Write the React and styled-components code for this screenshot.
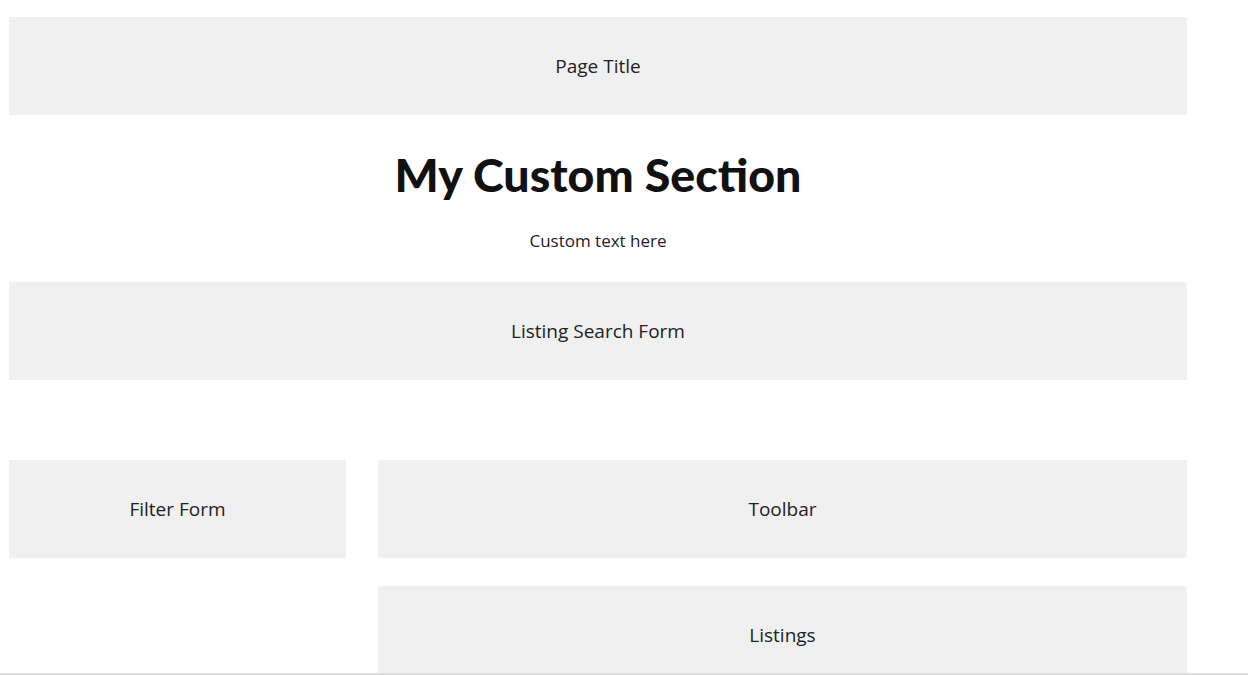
import React from "react";
import styled, { createGlobalStyle } from "styled-components";

const Global = createGlobalStyle`
  html, body { margin: 0; padding: 0; background: #fff; }
  body { font-family: "Open Sans", "Noto Sans", sans-serif; color: #222; overflow: hidden; }
`;

const Page = styled.div`
  width: 1178px;
  margin-left: 9px;
  padding-top: 17px;
`;

const Block = styled.div`
  background: #f0f0f0;
  height: ${(p) => p.$h || 98}px;
  display: flex;
  align-items: ${(p) => (p.$top ? "flex-start" : "center")};
  justify-content: center;
  padding-top: ${(p) => (p.$top ? "36px" : "0")};
  box-sizing: border-box;
  font-size: 19px;
  line-height: 26px;
  color: #222;
`;

const Section = styled.section`
  text-align: center;
  padding: 32px 0 29px;
`;

const Heading = styled.h2`
  margin: 0;
  font-family: "Lato", sans-serif;
  font-weight: 900;
  font-size: 46.5px;
  line-height: 54px;
  color: #111;
`;

const Sub = styled.p`
  margin: 28px 0 0;
  font-size: 17px;
  line-height: 24px;
  color: #222;
`;

const Spacer = styled.div`
  height: 80px;
`;

const Columns = styled.div`
  display: grid;
  grid-template-columns: 337px 1fr;
  column-gap: 32px;
  align-items: start;
`;

const Main = styled.div`
  display: flex;
  flex-direction: column;
  gap: 28px;
`;

const BottomRule = styled.div`
  position: fixed;
  left: 0;
  right: 0;
  bottom: 0;
  height: 2px;
  background: #dcdcdc;
`;

export default function App() {
  return (
    <>
      <Global />
      <Page>
        <Block>Page Title</Block>
        <Section>
          <Heading>My Custom Section</Heading>
          <Sub>Custom text here</Sub>
        </Section>
        <Block>Listing Search Form</Block>
        <Spacer />
        <Columns>
          <Block>Filter Form</Block>
          <Main>
            <Block>Toolbar</Block>
            <Block $h={200} $top>Listings</Block>
          </Main>
        </Columns>
      </Page>
      <BottomRule />
    </>
  );
}
